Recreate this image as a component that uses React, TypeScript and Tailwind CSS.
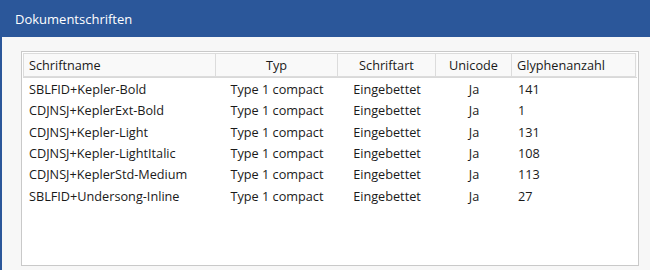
const fonts = [
  { name: 'SBLFID+Kepler-Bold', type: 'Type 1 compact', embed: 'Eingebettet', unicode: 'Ja', glyphs: '141' },
  { name: 'CDJNSJ+KeplerExt-Bold', type: 'Type 1 compact', embed: 'Eingebettet', unicode: 'Ja', glyphs: '1' },
  { name: 'CDJNSJ+Kepler-Light', type: 'Type 1 compact', embed: 'Eingebettet', unicode: 'Ja', glyphs: '131' },
  { name: 'CDJNSJ+Kepler-LightItalic', type: 'Type 1 compact', embed: 'Eingebettet', unicode: 'Ja', glyphs: '108' },
  { name: 'CDJNSJ+KeplerStd-Medium', type: 'Type 1 compact', embed: 'Eingebettet', unicode: 'Ja', glyphs: '113' },
  { name: 'SBLFID+Undersong-Inline', type: 'Type 1 compact', embed: 'Eingebettet', unicode: 'Ja', glyphs: '27' },
]

const cols = 'grid grid-cols-[193px_122px_98px_76px_124px]'

export default function App() {
  return (
    <div className="w-[650px] h-[270px] flex flex-col border-l-2 border-[#2b579a] bg-[#f7f7f7] font-['Segoe_UI','Open_Sans',sans-serif] text-[12.7px] text-[#1a1a1a] overflow-hidden">
      {/* Titelleiste */}
      <div className="h-[37px] shrink-0 bg-[#2b579a] flex items-center pl-[13px] pt-[3px] text-[13px] text-white">
        Dokumentschriften
      </div>

      <div className="flex-1 pt-[14px] pl-[19px]">
        <div className="w-[618px] h-[215px] border border-[#c9c9c9] bg-white p-px">
          {/* Kopfzeile */}
          <div className={`${cols} h-[25px] border-b border-[#d9d9d9] bg-[#f9f9f9]`}>
            <div className="border border-[#dcdcdc] flex items-center pt-[2px] pl-[5px]">Schriftname</div>
            <div className="border-y border-r border-[#dcdcdc] flex items-center justify-center pt-[2px]">Typ</div>
            <div className="border-y border-r border-[#dcdcdc] flex items-center justify-center pt-[2px]">Schriftart</div>
            <div className="border-y border-r border-[#dcdcdc] flex items-center justify-center pt-[2px]">Unicode</div>
            <div className="border-y border-r border-[#dcdcdc] flex items-center pt-[2px] pl-[5px]">Glyphenanzahl</div>
          </div>

          {/* Zeilen */}
          <div className="pt-px">
            {fonts.map((f) => (
              <div key={f.name} className={`${cols} h-[21.3px] items-center`}>
                <span className="pl-[6px] whitespace-nowrap">{f.name}</span>
                <span className="text-center">{f.type}</span>
                <span className="text-center">{f.embed}</span>
                <span className="text-center">{f.unicode}</span>
                <span className="pl-[6px]">{f.glyphs}</span>
              </div>
            ))}
          </div>
        </div>
      </div>
    </div>
  )
}
